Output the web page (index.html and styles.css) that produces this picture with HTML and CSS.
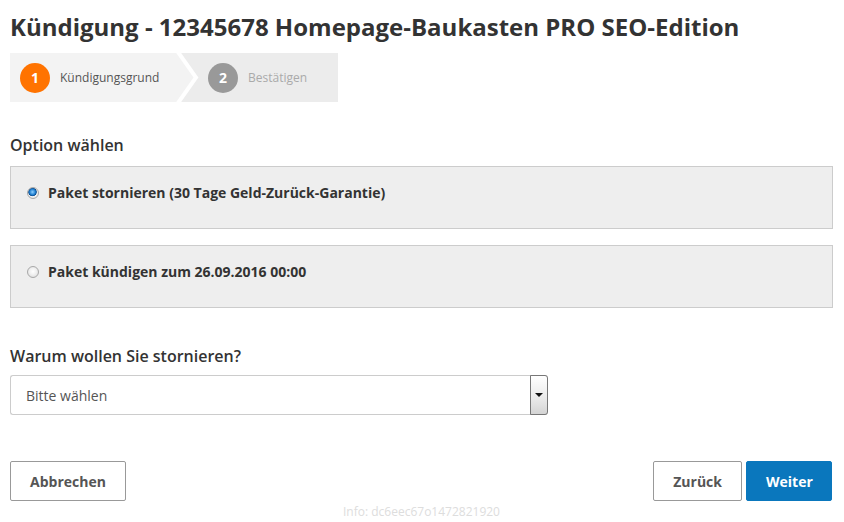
FILE: index.html
```html
<!DOCTYPE html>
<html lang="de">
<head>
  <meta charset="UTF-8" />
  <meta name="viewport" content="width=device-width, initial-scale=1.0" />
  <title>Kündigung</title>
  <link rel="stylesheet" href="styles.css">
</head>

<body>
  <div class="page">
    <h1 class="page-title">Kündigung - 12345678 Homepage-Baukasten PRO SEO-Edition</h1>

    <div class="steps">
      <div class="step step-active">
        <span class="step-num">1</span>
        <span class="step-label">Kündigungsgrund</span>
      </div>
      <svg class="step-sep" width="26" height="49" viewBox="0 0 26 49">
        <rect x="0" y="0" width="26" height="49" fill="#ececec" />
        <polygon points="0,0 4,0 22,24.5 4,49 0,49" fill="#f3f3f3" />
        <polyline points="4,-1 22,24.5 4,50" fill="none" stroke="#fff" stroke-width="4" />
      </svg>
      <div class="step">
        <span class="step-num">2</span>
        <span class="step-label">Bestätigen</span>
      </div>
    </div>

    <h2 class="section-title">Option wählen</h2>
    <label class="option">
      <input type="radio" name="option" checked />
      <span>Paket stornieren (30 Tage Geld-Zurück-Garantie)</span>
    </label>
    <label class="option">
      <input type="radio" name="option" />
      <span>Paket kündigen zum 26.09.2016 00:00</span>
    </label>

    <h2 class="section-title reason-title">Warum wollen Sie stornieren?</h2>
    <div class="select-box">
      <span class="select-value">Bitte wählen</span>
      <span class="select-arrow"></span>
    </div>

    <div class="actions">
      <button class="btn">Abbrechen</button>
      <div class="actions-right">
        <button class="btn">Zurück</button>
        <button class="btn btn-primary">Weiter</button>
      </div>
    </div>

    <p class="info">Info: dc6eec67o1472821920</p>
  </div>
</body>
</html>
```

FILE: styles.css
```css
* {
  box-sizing: border-box;
}

body {
  margin: 0;
  font-family: "Open Sans", "Liberation Sans", sans-serif;
  color: #333;
  background: #fff;
}

.page {
  padding: 0 11px 0 10px;
}

.page-title {
  margin: 0;
  padding-top: 10px;
  font-size: 24px;
  line-height: 33px;
  font-weight: 700;
  color: #333;
}

/* Schritte */
.steps {
  display: flex;
  width: 328px;
  height: 49px;
  margin-top: 10px;
  background: #ececec;
}

.step {
  display: flex;
  align-items: center;
  padding-left: 10px;
  flex: 1;
}

.step-active {
  flex: 0 0 164px;
  background: #f3f3f3;
}

.step-sep {
  display: block;
  flex: 0 0 26px;
}

.step + .step-sep + .step {
  padding-left: 8px;
}

.step-num {
  width: 30px;
  height: 30px;
  border-radius: 50%;
  background: #999;
  color: #fff;
  font-size: 14px;
  font-weight: 700;
  display: flex;
  align-items: center;
  justify-content: center;
  margin-right: 10px;
}

.step-active .step-num {
  background: #ff7300;
}

.step-label {
  font-size: 12px;
  color: #aaa;
}

.step-active .step-label {
  color: #555;
}

/* Optionen */
.section-title {
  margin: 32px 0 10px;
  font-size: 16px;
  line-height: 22px;
  font-weight: 600;
  color: #333;
}

.option {
  display: flex;
  align-items: center;
  height: 63px;
  margin-bottom: 16px;
  padding: 0 0 10px 16px;
  background: #eee;
  border: 1px solid #ccc;
  font-size: 14px;
  font-weight: 700;
  color: #333;
  cursor: pointer;
}

.option input {
  appearance: none;
  width: 12px;
  height: 12px;
  margin: 0 9px 0 0;
  border-radius: 50%;
  border: 1px solid #a8a8a8;
  background: radial-gradient(circle at 50% 45%, #fff 0%, #f0f0f0 45%, #d6d6d6 100%);
}

.option input:checked {
  background: radial-gradient(circle at 45% 40%, #8fd0ff 0%, #1f7fd0 35%, #0b4d90 48%, #f2f2f2 56%, #dcdcdc 100%);
}

.reason-title {
  margin-top: 37px;
  margin-bottom: 8px;
}

/* Auswahl */
.select-box {
  display: flex;
  width: 538px;
  height: 40px;
  border: 1px solid #ccc;
  border-right: 0;
  border-radius: 3px;
  background: #fff;
}

.select-value {
  flex: 1;
  display: flex;
  align-items: center;
  padding-left: 15px;
  font-size: 14px;
  color: #555;
}

.select-arrow {
  width: 18px;
  margin: -1px 0;
  border: 1px solid #777;
  border-radius: 0 3px 3px 0;
  background: linear-gradient(#fff, #e9e9e9 60%, #d4d4d4);
  display: flex;
  align-items: center;
  justify-content: center;
}

.select-arrow::after {
  content: "";
  border-left: 4px solid transparent;
  border-right: 4px solid transparent;
  border-top: 4px solid #111;
}

/* Buttons */
.actions {
  display: flex;
  justify-content: space-between;
  margin-top: 46px;
  padding-right: 1px;
}

.actions-right {
  display: flex;
  gap: 4px;
}

.btn {
  height: 40px;
  padding: 0 19px;
  border: 1px solid #999;
  border-radius: 2px;
  background: #fff;
  font-family: "Open Sans", "Liberation Sans", sans-serif;
  font-size: 14px;
  font-weight: 700;
  color: #555;
  cursor: pointer;
}

.btn-primary {
  width: 86px;
  background: #0a77bd;
  border-color: #0a77bd;
  color: #fff;
}

.info {
  margin: 2px 0 0;
  text-align: center;
  font-size: 12px;
  color: #ddd;
}
```
